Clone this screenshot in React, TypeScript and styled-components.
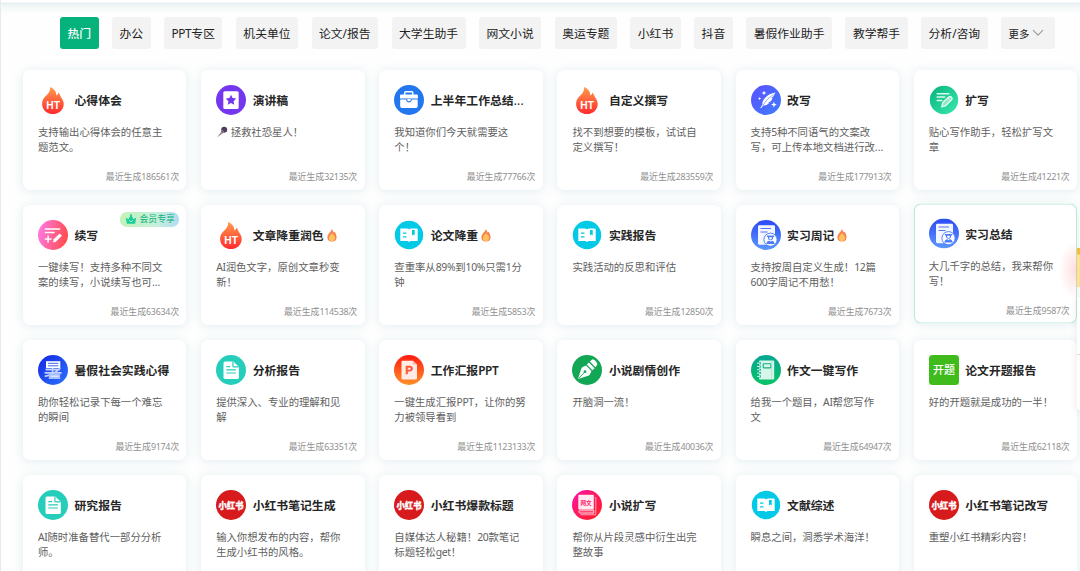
import React from 'react';
import styled, { createGlobalStyle, css } from 'styled-components';

const Global = createGlobalStyle`
  * { box-sizing: border-box; }
  html, body { margin: 0; padding: 0; }
  body {
    width: 1080px; height: 571px; overflow: hidden; background: #fff;
    font-family: "Noto Sans", "Noto Sans CJK SC", sans-serif; color: #262626;
  }
`;

const Page = styled.div`
  position: relative;
  width: 1080px;
  height: 571px;
  overflow: hidden;
  border-left: 1px solid #e8eaeb;
  background: #fefefe;
`;
const TopBar = styled.div`
  height: 14px;
  background: linear-gradient(#fff 0 2px, #e8eff2 3px, #f3f8f9 7px, #fefefe 14px);
`;
const Tabs = styled.nav`
  display: flex;
  gap: 13.4px;
  padding: 3px 0 0 59px;
`;
const Tab = styled.button<{ $active?: boolean; $small?: boolean }>`
  display: flex;
  align-items: center;
  flex: none;
  height: 32px;
  padding: 0 7.5px ${(p) => (p.$small ? 0 : 2)}px;
  border: 0;
  border-radius: 3px;
  font: ${(p) => (p.$active ? 500 : 400)} ${(p) => (p.$small ? 10.4 : 11.82)}px "Noto Sans", "Noto Sans CJK SC", sans-serif;
  white-space: nowrap;
  color: ${(p) => (p.$active ? '#fff' : '#222')};
  background: ${(p) => (p.$active ? '#05b27b' : '#f3f3f3')};
  svg { margin-left: 3px; margin-right: 3px; }
`;
const Latin = styled.span`
  letter-spacing: -0.03em;
`;
const Grid = styled.main`
  display: grid;
  grid-template-columns: repeat(6, 163.4px);
  grid-auto-rows: 120.3px;
  column-gap: 14.75px;
  row-gap: 14.8px;
  padding: 21px 0 0 22px;
`;
const Card = styled.article<{ $hover?: boolean }>`
  position: relative;
  display: flex;
  flex-direction: column;
  padding: 15px 7.4px 6px 15px;
  border-radius: 7px;
  background: #fff;
  box-shadow: 0 1px 11px rgba(50, 135, 155, 0.15);
  ${(p) =>
    p.$hover &&
    css`
      transform: translateY(-1.5px);
      box-shadow: inset 0 0 0 1px #b9ead6, 0 1px 11px rgba(50, 135, 155, 0.12);
    `}
`;
const Head = styled.div`
  display: flex;
  align-items: center;
  height: 30px;
  svg { flex: none; }
`;
const Title = styled.h3`
  margin: -1px 0 0 6.5px;
  font-size: 11.85px;
  font-weight: 600;
  line-height: 18px;
  white-space: nowrap;
  display: flex;
  align-items: center;
  svg { margin: 2px 0 0 3px; }
`;
const Ellipsis = styled.span`
  font-weight: 400;
  letter-spacing: 0.2px;
`;
const Desc = styled.p`
  margin: 10px 0 0;
  height: 30px;
  font-size: 10.37px;
  line-height: 15px;
  color: #606060;
  white-space: nowrap;
`;
const Count = styled.div`
  margin-top: auto;
  text-align: right;
  font-size: 8.9px;
  line-height: 15px;
  color: #909090;
`;
const VipBadge = styled.div`
  position: absolute;
  top: 7px;
  right: 7.4px;
  display: flex;
  align-items: center;
  gap: 2.5px;
  width: 59px;
  height: 14.5px;
  padding-left: 5px;
  border-radius: 7px;
  background: linear-gradient(90deg, #c3f2b8, #c6f0dc 60%, #b2dcf0);
  color: #10b07a;
  font-size: 8.9px;
  line-height: 14px;
  white-space: nowrap;
`;
const SideGlow = styled.div`
  position: absolute;
  right: 3px;
  top: 240px;
  width: 18px;
  height: 60px;
  background: radial-gradient(ellipse at 100% 50%, rgba(255, 110, 110, 0.25), rgba(255, 120, 110, 0) 70%);
`;
const SidePromo = styled.div`
  position: absolute;
  right: 0;
  top: 248px;
  width: 3px;
  height: 39px;
  background: linear-gradient(#f9bd32 0 6px, #fde38d 7px);
`;
const SidePanel = styled.div`
  position: absolute;
  right: 0;
  top: 297px;
  width: 3px;
  height: 113px;
  border-radius: 0 0 0 3px;
  background: linear-gradient(#fff 0 57px, #dcdcdc 57px 58px, #fff 58px);
  box-shadow: 0 2px 7px rgba(0, 0, 0, 0.14);
`;

type Kind =
  | 'fire' | 'star' | 'case' | 'feather' | 'expand' | 'continue' | 'book' | 'intern'
  | 'summer' | 'doc' | 'ppt' | 'pen' | 'note' | 'topic' | 'red' | 'novel';

const gradients: Partial<Record<Kind, [string, string, boolean?]>> = {
  fire: ['#ff9b4c', '#ff2b2f', true],
  feather: ['#5b50ff', '#3f7eff'],
  expand: ['#08b27c', '#38eab0'],
  continue: ['#ff78e4', '#ff4d4d'],
  intern: ['#2c49f6', '#5c98ff', true],
  summer: ['#1226e2', '#2e74ff'],
  ppt: ['#ff1a10', '#ff9128', true],
  note: ['#05a695', '#06c365', true],
  novel: ['#ff12a8', '#ff2018'],
};
const solids: Partial<Record<Kind, string>> = {
  star: '#7436ee', case: '#2277ee', book: '#02cae6', doc: '#25cdbb', pen: '#12a755', red: '#d71a1c',
};

const glyphs: Record<Kind, React.ReactNode> = {
  fire: (
    <text x="15.1" y="24.2" textAnchor="middle" fill="#fff" fontSize="10.8" fontWeight="700" fontFamily="Liberation Sans, sans-serif" textLength="13.6" lengthAdjust="spacingAndGlyphs">HT</text>
  ),
  star: (
    <>
      <rect x="7.3" y="6.3" width="15.4" height="17.8" rx="1.5" fill="#fff" />
      <path d="M15 9.8l1.6 3.3 3.6.5-2.6 2.6.6 3.6-3.2-1.7-3.2 1.7.6-3.6-2.6-2.6 3.6-.5z" fill="#7436ee" />
    </>
  ),
  case: (
    <>
      <path d="M10.8 10V7.6q0-.8.8-.8h6.4q.8 0 .8.8V10" fill="none" stroke="#fff" strokeWidth="1.4" />
      <path d="M7.2 9.5h15.4q1.3 0 1.3 1.3v2.6H6v-2.6q0-1.3 1.2-1.3zM6.2 14.6h5.9q.5 3 2.9 3t2.9-3h5.8v6.7q0 1.7-1.7 1.7H7.9q-1.7 0-1.7-1.7z" fill="#fff" />
      <path d="M13.3 14h3.4v.9q0 1.4-1.7 1.4t-1.7-1.4z" fill="#fff" />
    </>
  ),
  feather: (
    <g fill="#fff">
      <path d="M24.4 7.4q-8.2 1.6-11.7 7.2-1.6 2.6-1.3 5.1L9.2 23l.8.2 2.3-2.7q3.5.3 6.2-2.7l-1.7.1 3-1.6q1.2-1.6 1.8-3.6l-1.8.5 2.5-1.8q1.1-2.2 2.1-4z" />
      <path d="M22.5 9.5q-6 3.4-10.7 10.8" stroke="#4f66ff" strokeWidth=".55" fill="none" />
      <path d="M13 5.7l.7 1.6 1.6.7-1.6.7-.7 1.6-.7-1.6-1.6-.7 1.6-.7zM8.6 11.9l.5 1.2 1.2.5-1.2.5-.5 1.2-.5-1.2-1.2-.5 1.2-.5zM22.9 16.8l.8 2 2 .8-2 .8-.8 2-.8-2-2-.8 2-.8z" />
    </g>
  ),
  expand: (
    <g stroke="#ddfff0" strokeWidth="1.5" fill="none" strokeLinecap="round">
      <path d="M8.2 8.7h11.6M8.2 12.1h7.4M8.2 15.5h4.6" />
      <path d="M12.9 21.9l.8-4.3 6.3-5.8q1.2-.8 2.5.4 1.2 1.4.2 2.5l-6.3 6.2z" fill="#93e6c4" strokeWidth="1.3" />
      <path d="M18.9 12.9l2.7 2.9" strokeWidth="1" />
    </g>
  ),
  continue: (
    <g stroke="#fff" strokeWidth="1.5" fill="none">
      <path d="M6.8 8.9h15.4M6.8 12.5h9.8M6.8 18.9h6.8M10.1 15.5v7" />
      <path d="M16.2 21l6.6-6.4" strokeWidth="3.2" />
      <path d="M15.1 22.4l.3-2.2 1.9 1.8z" fill="#fff" stroke="none" />
    </g>
  ),
  book: (
    <>
      <path d="M6.3 8.6h6.2q2 0 2.5.9.6-.9 2.5-.9h5q1.2 0 1.2 1.2v11.3h-7.2L15 22l-1.5-.9H6.3z" fill="#fff" />
      <path d="M9 13.1h3.5M9 16.9h3.5" stroke="#02cae6" strokeWidth="1.3" />
      <path d="M18 10h2.7v5.5l-1.35-1L18 15.5z" fill="#02cae6" />
    </>
  ),
  intern: (
    <>
      <rect x="7" y="5.2" width="17" height="19.5" rx="1.4" fill="#f4f6ff" />
      <path d="M9.5 8.5h10.5M9.5 12h7" stroke="#5273fa" strokeWidth="1.2" />
      <circle cx="19.5" cy="19.7" r="6.6" fill="#fff" stroke="#5482fa" strokeWidth="1" />
      <path d="M15.9 15.4h7.2v1.5h-1q.1 3.2-2.6 3.4-2.6-.2-2.6-3.4h-1zM15.4 24q0-2.9 3-3.3l1.1 1 1.1-1q3 .4 3 3.3z" fill="#4c7dfa" />
      <path d="M18.2 17.2h2.6v1.2q-.2 1-1.3 1t-1.3-1z" fill="#fff" />
    </>
  ),
  summer: (
    <>
      <path d="M8 6.2h14.3v7H8z" fill="#fff" />
      <path d="M10 8.3h10.4M10 10.8h10.4" stroke="#3152ec" strokeWidth=".9" />
      <path d="M7.6 14.7h14.4M6.6 17.9h17M14.6 12.8v5M22.3 13Q16 19.8 6.7 21.4" stroke="#c5d3ff" strokeWidth="1.7" fill="none" />
      <path d="M10.8 18.6h11.4V24H10.8z" fill="#a9c1ff" />
      <path d="M12.6 21.2h8" stroke="#eef3ff" strokeWidth="1" />
    </>
  ),
  doc: (
    <>
      <path d="M9 6.4h8.3l5.6 5.4v10.6q0 1.6-1.6 1.6H9q-1.5 0-1.5-1.6V8q0-1.6 1.5-1.6z" fill="#fff" />
      <path d="M16.9 6.6v4.3q0 1 1 1h4.8M10.3 11.6h3.9M10.3 14.8h9.6M10.3 18h9.6" stroke="#25cdbb" strokeWidth="1.15" fill="none" />
    </>
  ),
  ppt: (
    <>
      <path d="M8.3 5.7h10.5l4.2 3.7v14.2q0 .8-.8.8H8.3q-.8 0-.8-.8V6.5q0-.8.8-.8z" fill="#ffede5" />
      <path d="M18.8 5.7v3.7H23z" fill="#ffb49b" />
      <text x="15.3" y="19.3" textAnchor="middle" fill="#ff5432" stroke="#ff5432" strokeWidth=".3" fontSize="11.8" fontWeight="700" fontFamily="Liberation Sans, sans-serif">P</text>
    </>
  ),
  pen: (
    <>
      <path d="M6 24.1L9.2 13.7q.4-1.2 1.6-1.7l3.2-1.6 5.5 5.7-1.6 3.2q-.5 1.1-1.7 1.5z" fill="#fff" />
      <path d="M14.8 9.5l2.1-2.1 5.7 5.8-2.1 2.1z" fill="#fff" />
      <path d="M17.8 6.6l2.7-2.4q3.2.5 5 5l-2 3.1z" fill="#fff" />
      <path d="M6.7 23.5l5.8-6.3" stroke="#12a755" strokeWidth=".9" />
      <circle cx="13" cy="16.7" r="1.4" fill="#12a755" />
    </>
  ),
  note: (
    <>
      <rect x="8" y="5.6" width="15.2" height="19" rx="1.1" fill="#d7f5e8" />
      <rect x="12.2" y="8.7" width="7.7" height="4.2" rx=".6" fill="none" stroke="#0eb082" strokeWidth="1.1" />
      <path d="M20.7 6v18" stroke="#9fe2c8" strokeWidth=".7" />
      <path d="M6.2 8.2h3.8M6.2 11.5h3.8M6.2 14.8h3.8M6.2 18.1h3.8M6.2 21.4h3.8" stroke="#0aac88" strokeWidth="2" />
      <path d="M6 8.2h3.3M6 11.5h3.3M6 14.8h3.3M6 18.1h3.3M6 21.4h3.3" stroke="#e7fff5" strokeWidth=".9" />
    </>
  ),
  topic: (
    <text x="15" y="19.2" textAnchor="middle" fill="#fff" fontSize="11" fontWeight="500" fontFamily="Noto Sans CJK SC, sans-serif">开题</text>
  ),
  red: (
    <text x="15" y="18.7" textAnchor="middle" fill="#fff" stroke="#fff" strokeWidth=".3" fontSize="9.3" fontWeight="900" fontFamily="Noto Sans CJK SC, sans-serif" textLength="25" lengthAdjust="spacingAndGlyphs">小红书</text>
  ),
  novel: (
    <>
      <path d="M22.6 7.6h1.2v17.200H8.500" fill="none" stroke="#ffa3b8" strokeWidth="1" />
      <rect x="6.3" y="4.8" width="15.500" height="14.800" rx="1" fill="#ffeaf1" />
      <path d="M21.800 20.100H8.400q-1.500 0-1.500 1.500t1.500 1.500h13.400z" fill="#ff4a70" stroke="#ffd3de" strokeWidth="1" />
      <text x="14.100" y="14.600" textAnchor="middle" fill="#ff2d70" fontSize="5.600" fontWeight="700" fontFamily="Noto Sans CJK SC, sans-serif">网文</text>
    </>
  ),
};

function CardIcon({ kind, id }: { kind: Kind; id: string }) {
  const g = gradients[kind];
  const fill = g ? `url(#${id})` : solids[kind];
  const radius = kind === 'expand' || kind === 'book' ? 14.2 : 15;
  return (
    <svg width="30" height="30" viewBox="0 0 30 30">
      {g && (
        <defs>
          <linearGradient id={id} x1="0" y1={g[2] || kind !== 'continue' ? '0' : '.3'} x2={g[2] ? '0' : '1'} y2={kind === 'continue' ? '.5' : '1'}>
            <stop stopColor={g[0]} />
            <stop offset="1" stopColor={g[1]} />
          </linearGradient>
        </defs>
      )}
      {kind === 'fire' ? (
        <path d="M12.3 1.900c4.300 2 6.200 5 6 8.500 1.400-.6 2-1.500 2.100-2.800 1.600 1.700 1.700 3.300 2.800 5 1.700 2.300 2.500 4.200 2.500 6.300 0 5.900-4.800 10.100-10.800 10.100S4.100 24.600 4.100 18.900c0-3.200 1.300-5.500 3.700-7.800 3-3 4.400-5.200 4.500-9.200z" fill={fill} />
      ) : kind === 'topic' ? (
        <rect width="30" height="30" rx="3.5" fill="#3fbb1c" />
      ) : (
        <circle cx="15" cy="15" r={radius} fill={fill} />
      )}
      {glyphs[kind]}
    </svg>
  );
}

const Flame = () => (
  <svg width="10" height="13" viewBox="0 0 10 13">
    <path d="M4.5.3q1.700 1.400 2.200 3.300l1-.9q1.900 2.700 1.900 5.300 0 4.500-4.600 4.500T.4 8.200Q.4 6 2.300 4.100 4.300 2.300 4.500.3z" fill="#f68350" />
    <path d="M5 4.300q3.500 3 3.100 5.300-.4 2.600-3.100 2.600T1.900 9.600Q1.700 7.300 5 4.300z" fill="#ffc35e" />
  </svg>
);
const Mic = styled.svg`
  width: 12px;
  height: 12px;
  margin-right: 2.5px;
  vertical-align: -2px;
`;
const Crown = () => (
  <svg width="12" height="11" viewBox="0 0 12 11">
    <path d="M.8 3.400l2.500 1.800L6 .8l2.700 4.400 2.500-1.800-1.100 6.400H1.900z" fill="#19cd9a" />
    <circle cx="6" cy="1.300" r="1" fill="#19cd9a" />
    <path d="M4 6.200l2 1.700 2-1.700" stroke="#c6f5dd" fill="none" strokeWidth=".8" />
  </svg>
);

/* Latin letters and digits are set slightly tighter than the Chinese text around them. */
function Mixed({ text }: { text: string }) {
  return (
    <span>
      {text.split(/([A-Za-z0-9%]+)/).map((part, i) => (i % 2 ? <Latin key={i}>{part}</Latin> : part))}
    </span>
  );
}

const tabs = ['热门', '办公', 'PPT专区', '机关单位', '论文/报告', '大学生助手', '网文小说', '奥运专题', '小红书', '抖音', '暑假作业助手', '教学帮手', '分析/咨询'];

interface Item {
  icon: Kind;
  title: string;
  lines: string[];
  count?: string;
  cut?: boolean;
  hot?: boolean;
  vip?: boolean;
  hover?: boolean;
  mic?: boolean;
}
const items: Item[] = [
  { icon: 'fire', title: '心得体会', lines: ['支持输出心得体会的任意主', '题范文。'], count: '186561' },
  { icon: 'star', title: '演讲稿', lines: ['拯救社恐星人！'], count: '32135', mic: true },
  { icon: 'case', title: '上半年工作总结', cut: true, lines: ['我知道你们今天就需要这', '个！'], count: '77766' },
  { icon: 'fire', title: '自定义撰写', lines: ['找不到想要的模板，试试自', '定义撰写！'], count: '283559' },
  { icon: 'feather', title: '改写', lines: ['支持5种不同语气的文案改', '写，可上传本地文档进行改...'], count: '177913' },
  { icon: 'expand', title: '扩写', lines: ['贴心写作助手，轻松扩写文', '章'], count: '41221' },
  { icon: 'continue', title: '续写', lines: ['一键续写！支持多种不同文', '案的续写，小说续写也可...'], count: '63634', vip: true },
  { icon: 'fire', title: '文章降重润色', lines: ['AI润色文字，原创文章秒变', '新！'], count: '114538', hot: true },
  { icon: 'book', title: '论文降重', lines: ['查重率从89%到10%只需1分', '钟'], count: '5853', hot: true },
  { icon: 'book', title: '实践报告', lines: ['实践活动的反思和评估'], count: '12850' },
  { icon: 'intern', title: '实习周记', lines: ['支持按周自定义生成！12篇', '600字周记不用愁！'], count: '7673', hot: true },
  { icon: 'intern', title: '实习总结', lines: ['大几千字的总结，我来帮你', '写！'], count: '9587', hover: true },
  { icon: 'summer', title: '暑假社会实践心得', lines: ['助你轻松记录下每一个难忘', '的瞬间'], count: '9174' },
  { icon: 'doc', title: '分析报告', lines: ['提供深入、专业的理解和见', '解'], count: '63351' },
  { icon: 'ppt', title: '工作汇报PPT', lines: ['一键生成汇报PPT，让你的努', '力被领导看到'], count: '1123133' },
  { icon: 'pen', title: '小说剧情创作', lines: ['开脑洞一流！'], count: '40036' },
  { icon: 'note', title: '作文一键写作', lines: ['给我一个题目，AI帮您写作', '文'], count: '64947' },
  { icon: 'topic', title: '论文开题报告', lines: ['好的开题就是成功的一半！'], count: '62118' },
  { icon: 'doc', title: '研究报告', lines: ['AI随时准备替代一部分分析', '师。'] },
  { icon: 'red', title: '小红书笔记生成', lines: ['输入你想发布的内容，帮你', '生成小红书的风格。'] },
  { icon: 'red', title: '小红书爆款标题', lines: ['自媒体达人秘籍！20款笔记', '标题轻松get！'] },
  { icon: 'novel', title: '小说扩写', lines: ['帮你从片段灵感中衍生出完', '整故事'] },
  { icon: 'book', title: '文献综述', lines: ['瞬息之间，洞悉学术海洋！'] },
  { icon: 'red', title: '小红书笔记改写', lines: ['重塑小红书精彩内容！'] },
];

export default function App() {
  return (
    <>
      <Global />
      <Page>
        <TopBar />
        <Tabs>
          {tabs.map((t, i) => (
            <Tab key={t} $active={i === 0}>
              <Mixed text={t} />
            </Tab>
          ))}
          <Tab $small>
            更多
            <svg width="12" height="8" viewBox="0 0 12 8">
              <path d="M1 1.200l5 5 5-5" fill="none" stroke="#999" strokeWidth="1.100" />
            </svg>
          </Tab>
        </Tabs>
        <Grid>
          {items.map((it, i) => (
            <Card key={it.title} $hover={it.hover}>
              {it.vip && (
                <VipBadge>
                  <Crown />
                  会员专享
                </VipBadge>
              )}
              <Head>
                <CardIcon kind={it.icon} id={`grad-${i}`} />
                <Title>
                  <Mixed text={it.title} />
                  {it.cut && <Ellipsis>...</Ellipsis>}
                  {it.hot && <Flame />}
                </Title>
              </Head>
              <Desc>
                {it.mic && (
                  <Mic viewBox="0 0 12 12">
                    <path d="M1 11.500L6 4.500l2 2z" fill="#9d929b" />
                    <circle cx="8.200" cy="3.700" r="3" fill="#533d5c" />
                    <path d="M5.500 3.800l2.900 3" stroke="#a797a8" strokeWidth="1" />
                  </Mic>
                )}
                {it.lines.map((l, n) => (
                  <React.Fragment key={l}>
                    {n > 0 && <br />}
                    <Mixed text={l} />
                  </React.Fragment>
                ))}
              </Desc>
              {it.count && (
                <Count>
                  <Mixed text={`最近生成${it.count}次`} />
                </Count>
              )}
            </Card>
          ))}
        </Grid>
        <SideGlow />
        <SidePanel />
        <SidePromo />
      </Page>
    </>
  );
}
